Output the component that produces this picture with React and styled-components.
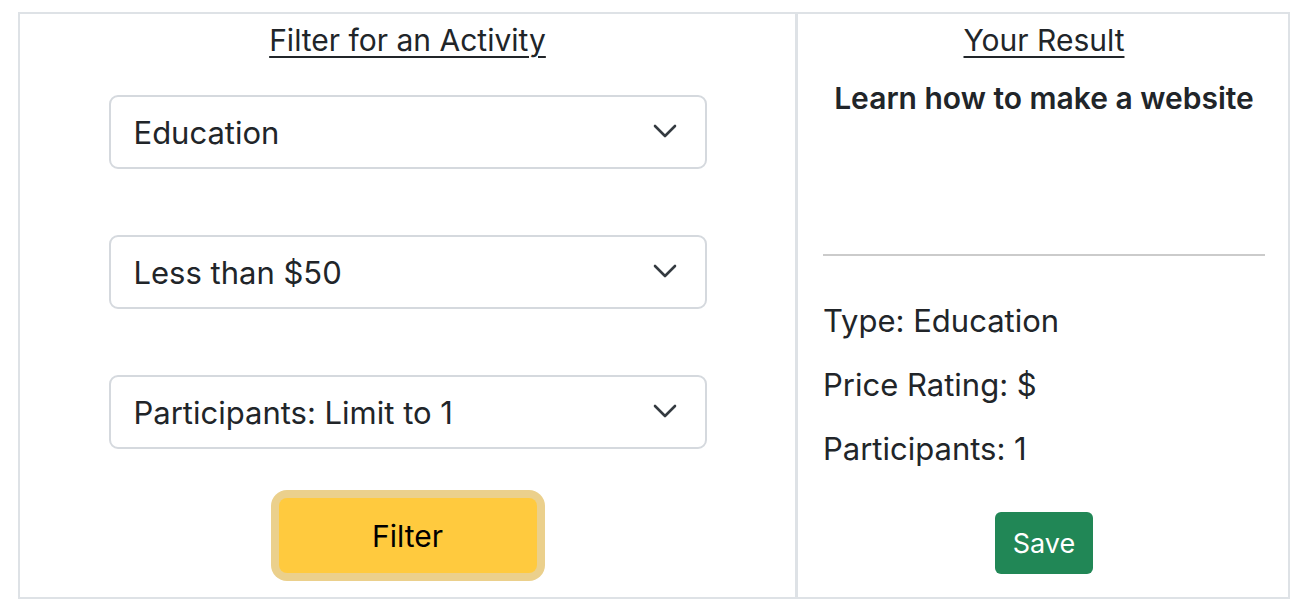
import React from "react";
import styled, { createGlobalStyle } from "styled-components";

const GlobalStyle = createGlobalStyle`
	body {
		margin: 0;
		background: #ffffff;
		font-family: Inter, "Liberation Sans", sans-serif;
		color: #212529;
	}
`;

const Page = styled.div`
	padding: 12px 0 0 18px;
`;

const Board = styled.div`
	display: flex;
	width: 1268px;
	height: 583px;
	border: 2px solid #dee2e6;
`;

const FilterPanel = styled.div`
	width: 775px;
	display: flex;
	flex-direction: column;
	align-items: center;
	border-right: 3px solid #dee2e6;
`;

const ResultPanel = styled.div`
	flex: 1;
	display: flex;
	flex-direction: column;
	padding: 0 23px 0 25px;
`;

const Heading = styled.h2`
	margin: 8px 0 0;
	font-size: 30px;
	font-weight: 400;
	line-height: 36px;
	text-align: center;
	text-decoration: underline;
	text-underline-offset: 5px;
	text-decoration-thickness: 2px;
`;

const SelectWrap = styled.div`
	position: relative;
	width: 598px;
	margin-top: ${(p) => p.$top}px;
`;

const Select = styled.select`
	appearance: none;
	width: 100%;
	height: 74px;
	padding: 0 60px 0 23px;
	font-family: inherit;
	font-size: 31px;
	color: #212529;
	background: #ffffff;
	border: 2px solid #d5d9de;
	border-radius: 9px;
	outline: none;
`;

const Chevron = styled.svg`
	position: absolute;
	right: 30px;
	top: 29px;
	width: 24px;
	height: 14px;
	pointer-events: none;
`;

const FilterButton = styled.button`
	margin-top: 49px;
	width: 258px;
	height: 75px;
	font-family: inherit;
	font-size: 30px;
	color: #000000;
	background: #ffca3e;
	border: none;
	border-radius: 8px;
	box-shadow: 0 0 0 8px #ebd08c;
	cursor: pointer;
`;

const ResultTitle = styled.h3`
	margin: 22px 0 0;
	font-size: 30px;
	font-weight: 600;
	line-height: 36px;
	text-align: center;
`;

const Rule = styled.hr`
	margin: 138px 0 0;
	border: none;
	border-top: 2px solid #cbcbcb;
`;

const Detail = styled.p`
	margin: ${(p) => p.$top}px 0 0;
	font-size: 31px;
	line-height: 36px;
`;

const SaveButton = styled.button`
	align-self: center;
	margin-top: 45px;
	width: 98px;
	height: 62px;
	font-family: inherit;
	font-size: 27px;
	color: #ffffff;
	background: #218756;
	border: none;
	border-radius: 6px;
	cursor: pointer;
`;

const ChevronIcon = () => (
	<Chevron viewBox="0 0 24 14" fill="none">
		<path d="M2 2l10 10 10-10" stroke="#343a40" strokeWidth="2.6" strokeLinecap="round" strokeLinejoin="round" />
	</Chevron>
);

const filters = [
	{ value: "Education", top: 37 },
	{ value: "Less than $50", top: 66 },
	{ value: "Participants: Limit to 1", top: 66 },
];

const details = [
	{ text: "Type: Education", top: 47 },
	{ text: "Price Rating: $", top: 28 },
	{ text: "Participants: 1", top: 28 },
];

const App = () => {
	return (
		<>
			<GlobalStyle />
			<Page>
				<Board>
					<FilterPanel>
						<Heading>Filter for an Activity</Heading>
						{filters.map((f) => (
							<SelectWrap key={f.value} $top={f.top}>
								<Select defaultValue={f.value}>
									<option>{f.value}</option>
								</Select>
								<ChevronIcon />
							</SelectWrap>
						))}
						<FilterButton>Filter</FilterButton>
					</FilterPanel>
					<ResultPanel>
						<Heading>Your Result</Heading>
						<ResultTitle>Learn how to make a website</ResultTitle>
						<Rule />
						{details.map((d) => (
							<Detail key={d.text} $top={d.top}>
								{d.text}
							</Detail>
						))}
						<SaveButton>Save</SaveButton>
					</ResultPanel>
				</Board>
			</Page>
		</>
	);
};

export default App;
